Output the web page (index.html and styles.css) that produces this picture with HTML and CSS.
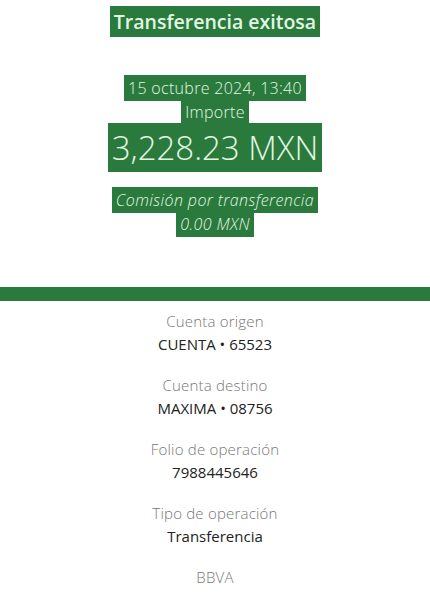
FILE: index.html
```html
<!DOCTYPE html>
<html lang="es">
<head>
    <meta charset="UTF-8">
    <title>Transferencia exitosa</title>
    <link rel="stylesheet" href="styles.css">
</head>
<body>
    <header class="summary">
        <h1 class="title"><span class="tag">Transferencia exitosa</span></h1>

        <p class="date"><span class="tag">15 octubre 2024, 13:40</span></p>
        <p class="amount-label"><span class="tag">Importe</span></p>
        <p class="amount"><span class="tag">3,228.23 MXN</span></p>

        <p class="fee"><span class="tag">Comisión por transferencia</span></p>
        <p class="fee"><span class="tag">0.00 MXN</span></p>
    </header>

    <div class="divider"></div>

    <section class="details">
        <div class="row">
            <span class="label">Cuenta origen</span>
            <span class="value">CUENTA • 65523</span>
        </div>
        <div class="row">
            <span class="label">Cuenta destino</span>
            <span class="value">MAXIMA • 08756</span>
        </div>
        <div class="row">
            <span class="label">Folio de operación</span>
            <span class="value">7988445646</span>
        </div>
        <div class="row">
            <span class="label">Tipo de operación</span>
            <span class="value">Transferencia</span>
        </div>
        <div class="row">
            <span class="label">BBVA</span>
        </div>
    </section>
</body>
</html>
```

FILE: styles.css
```css
body {
    font-family: "Open Sans", Lato, sans-serif;
    background-color: #fff;
    margin: 0;
    text-align: center;
}

p {
    margin: 0;
}

.summary {
    padding-top: 10px;
    height: 287px;
    box-sizing: border-box;
}

.tag {
    background-color: #2a7a3d;
    color: #e3f6e3;
    padding: 2px 4px;
}

.title {
    margin: 0 0 42px;
    font-size: 19.5px;
    font-weight: 600;
    line-height: 24px;
}

.date,
.amount-label {
    font-size: 16px;
    font-weight: 300;
    letter-spacing: 0.3px;
    line-height: 24px;
}

.amount {
    font-size: 33px;
    font-weight: 300;
    line-height: 40px;
    margin: 4px 0 20px;
}

.fee {
    font-size: 16px;
    font-style: italic;
    font-weight: 300;
    letter-spacing: 0.4px;
    line-height: 24px;
}

.divider {
    height: 14px;
    background-color: #2a7a3d;
}

.details {
    padding-top: 10px;
}

.row {
    display: flex;
    flex-direction: column;
    align-items: center;
    gap: 3px;
    margin-bottom: 21px;
}

.label {
    font-size: 15px;
    font-weight: 300;
    letter-spacing: 0.2px;
    color: #777;
    line-height: 20px;
}

.value {
    font-size: 15px;
    color: #222;
    line-height: 20px;
}
```
